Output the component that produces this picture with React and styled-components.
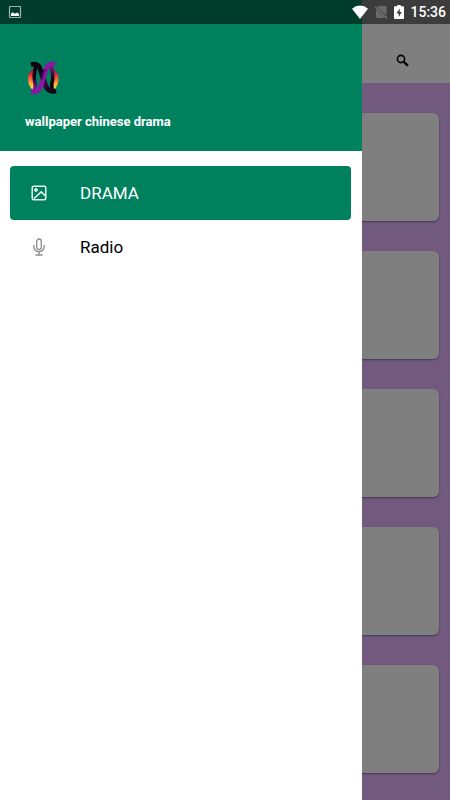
import React from "react";
import styled, { createGlobalStyle } from "styled-components";

const GlobalStyle = createGlobalStyle`
  * {
    box-sizing: border-box;
  }
  body {
    margin: 0;
    background: #e4b4ff;
    font-family: Roboto, "Liberation Sans", sans-serif;
  }
`;

const PictureIcon = () => (
  <svg width="14" height="14" viewBox="0 0 14 14" fill="none" aria-hidden="true">
    <rect x="1.500" y="1.500" width="11" height="11" rx="0.500" stroke="#9db5ae" strokeWidth="1.200" />
    <path d="M3 11V8.500l2-1.200 1.600 1.500L9 7.500l2 1.500v2z" fill="#fff" />
  </svg>
);

const WifiIcon = () => (
  <svg width="16" height="14" viewBox="0 0 16 14" aria-hidden="true">
    <path d="M0 3.800Q3.500 .6 8 .6t8 3.200L8 14z" fill="#fff" />
  </svg>
);

const NoSimIcon = () => (
  <svg width="14" height="14" viewBox="0 0 14 14" aria-hidden="true">
    <path d="M5 1h6.500q1 0 1 1v8.500L3.500 2.500zM2 4.200L11 13H3q-1 0-1-1z" fill="#6a6a6a" />
    <path d="M1.200 1.700L13 13.300" stroke="#777" strokeWidth="1.200" />
  </svg>
);

const BatteryIcon = () => (
  <svg width="10" height="14" viewBox="0 0 10 14" aria-hidden="true">
    <path d="M3.300 0h3.400v1.300H9q1 0 1 1V13q0 1-1 1H1q-1 0-1-1V2.300q0-1 1-1h2.300z" fill="#fff" />
    <path d="M5.800 3.500L2.500 8.300h2.200V12l3-5H5.600z" fill="#303030" />
  </svg>
);

const SearchIcon = () => (
  <svg width="13" height="13" viewBox="0 0 13 13" fill="none" stroke="#000" aria-hidden="true">
    <circle cx="5" cy="5" r="3.600" strokeWidth="1.600" />
    <path d="M7.500 7.500l1.500 1.500" strokeWidth="1.600" />
    <path d="M8.800 8.800l2.500 2.300" strokeWidth="2.400" strokeLinecap="round" />
  </svg>
);

const GalleryIcon = () => (
  <svg width="16" height="16" viewBox="0 0 16 16" fill="none" stroke="#e6f4ef" aria-hidden="true">
    <rect x="1.200" y="1.200" width="13.600" height="13.600" rx="1.500" strokeWidth="1.500" />
    <circle cx="5" cy="5" r="1.400" fill="#e6f4ef" strokeWidth="1" />
    <path d="M3 13.500l7.200-6.600L14.500 11" strokeWidth="1.600" />
  </svg>
);

const MicIcon = () => (
  <svg width="12" height="18" viewBox="0 0 12 18" fill="none" stroke="#8c8c8c" aria-hidden="true">
    <rect x="3.700" y="1" width="4.600" height="10.500" rx="2.300" strokeWidth="1.300" />
    <path d="M.8 7v1.500a5.200 5.200 0 0 0 10.400 0V7M6 13.800V17M2.500 17h7" strokeWidth="1.300" />
  </svg>
);

const Logo = () => (
  <svg width="36" height="36" viewBox="0 0 36 36" fill="none" aria-hidden="true">
    <defs>
      <linearGradient id="flame" x1="0" y1="7" x2="0" y2="30" gradientUnits="userSpaceOnUse">
        <stop offset="0" stopColor="#6b0c30" />
        <stop offset="0.350" stopColor="#e8303c" />
        <stop offset="0.650" stopColor="#ff9436" />
        <stop offset="0.950" stopColor="#ffe83a" />
      </linearGradient>
      <linearGradient id="darkToViolet" x1="0" y1="3" x2="0" y2="33" gradientUnits="userSpaceOnUse">
        <stop offset="0" stopColor="#080008" />
        <stop offset="0.500" stopColor="#16001c" />
        <stop offset="0.750" stopColor="#700d85" />
        <stop offset="1" stopColor="#9c1cb2" />
      </linearGradient>
      <linearGradient id="violetToDark" x1="0" y1="3" x2="0" y2="33" gradientUnits="userSpaceOnUse">
        <stop offset="0" stopColor="#9c1cb2" />
        <stop offset="0.300" stopColor="#500a60" />
        <stop offset="0.550" stopColor="#10000f" />
        <stop offset="1" stopColor="#080008" />
      </linearGradient>
      <linearGradient id="crossDark" x1="0" y1="3" x2="0" y2="33" gradientUnits="userSpaceOnUse">
        <stop offset="0" stopColor="#080008" />
        <stop offset="0.400" stopColor="#200028" />
        <stop offset="0.700" stopColor="#3a0646" />
        <stop offset="1" stopColor="#080008" />
      </linearGradient>
    </defs>
    <path d="M9.500 8Q3 12 3 19q0 7 5 11l2-5z" fill="url(#flame)" />
    <path d="M27 8q6.500 4 6.500 11 0 7-5 11l-2-5z" fill="url(#flame)" />
    <path d="M11 6q-3 11-1 17 1 5-2 9" stroke="url(#darkToViolet)" strokeWidth="3.500" />
    <path d="M26 6q3 11 1 17-1 5 2 9" stroke="url(#violetToDark)" strokeWidth="3.500" />
    <path d="M6 4.500C16 2 15 11 18 18s3 15 13 13" stroke="url(#crossDark)" strokeWidth="4.800" />
    <path d="M30 4C21 2 21 11 18.500 18S16 33 6 32" stroke="#8a18a0" strokeWidth="4.600" />
    <path d="M20 9.500q-3 4-3.500 10" stroke="#3a0646" strokeWidth="2.500" opacity="0.700" />
  </svg>
);

const menu = [
  { label: "DRAMA", icon: <GalleryIcon />, active: true },
  { label: "Radio", icon: <MicIcon />, active: false },
];

const cards = [1, 2, 3, 4, 5];

const App = () => {
  return (
    <Screen>
      <GlobalStyle />
      <Toolbar>
        <SearchButton type="button" aria-label="Search">
          <SearchIcon />
        </SearchButton>
      </Toolbar>
      <CardList>
        {cards.map((it) => (
          <Card key={it} />
        ))}
      </CardList>
      <Scrim />
      <Drawer>
        <DrawerHeader>
          <Logo />
          <Title>wallpaper chinese drama</Title>
        </DrawerHeader>
        <Menu>
          {menu.map((it) => (
            <MenuItem key={it.label} href="#" $active={it.active}>
              <IconBox>{it.icon}</IconBox>
              {it.label}
            </MenuItem>
          ))}
        </Menu>
      </Drawer>
      <StatusBar>
        <PictureIcon />
        <StatusGroup>
          <WifiIcon />
          <NoSimIcon />
          <BatteryIcon />
          <Clock>15:36</Clock>
        </StatusGroup>
      </StatusBar>
    </Screen>
  );
};

const Screen = styled.div`
  position: relative;
  height: 100vh;
  overflow: hidden;
`;

const Toolbar = styled.header`
  display: flex;
  justify-content: flex-end;
  align-items: center;
  height: 83px;
  padding: 38px 35px 0;
  background: #fff;
`;

const SearchButton = styled.button`
  display: flex;
  padding: 6px;
  border: none;
  background: none;
`;

const CardList = styled.main`
  display: flex;
  flex-direction: column;
  gap: 30px;
  padding: 30px 11px;
`;

const Card = styled.article`
  flex: none;
  height: 108px;
  border-radius: 6px;
  background: #fff;
  box-shadow: 0 1px 2px rgba(0, 0, 0, 0.4);
`;

const Scrim = styled.div`
  position: absolute;
  inset: 0;
  background: rgba(0, 0, 0, 0.5);
`;

const Drawer = styled.aside`
  position: absolute;
  top: 0;
  bottom: 0;
  left: 0;
  width: calc(100% - 88px);
  background: #fff;
`;

const DrawerHeader = styled.div`
  display: flex;
  flex-direction: column;
  gap: 18px;
  height: 151px;
  padding: 60px 25px 0;
  background: #00815e;
`;

const Title = styled.h1`
  margin: 0;
  color: #fff;
  font-size: 13px;
  font-weight: 700;
  line-height: 16px;
`;

const Menu = styled.nav`
  display: flex;
  flex-direction: column;
  padding: 15px 11px 0 10px;
`;

const MenuItem = styled.a`
  display: flex;
  align-items: center;
  gap: 32px;
  height: 54px;
  padding: 0 20px;
  border-radius: 4px;
  background: ${({ $active }) => ($active ? "#00815e" : "transparent")};
  color: ${({ $active }) => ($active ? "#fff" : "#000")};
  font-size: 17px;
  text-decoration: none;
`;

const IconBox = styled.span`
  display: flex;
  justify-content: center;
  width: 18px;
`;

const StatusBar = styled.div`
  position: absolute;
  top: 0;
  left: 0;
  right: 0;
  display: flex;
  justify-content: space-between;
  align-items: center;
  height: 24px;
  padding: 0 4px 0 8px;
  background: rgba(0, 0, 0, 0.53);
`;

const StatusGroup = styled.div`
  display: flex;
  align-items: center;
  gap: 6px;
`;

const Clock = styled.time`
  color: #fff;
  font-size: 14px;
  font-weight: 500;
  line-height: 24px;
`;

export default App;
